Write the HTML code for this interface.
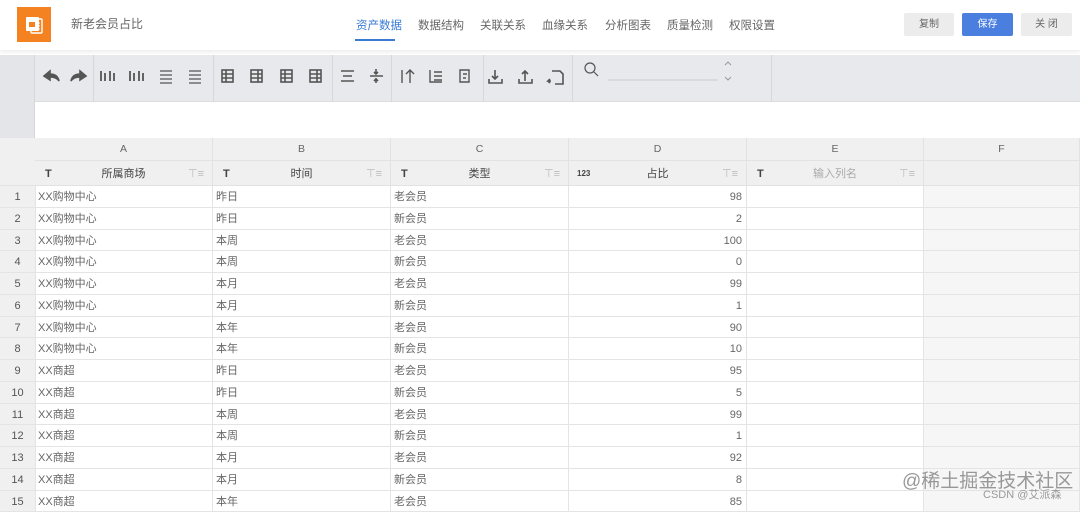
<!DOCTYPE html>
<html><head><meta charset="utf-8"><style>
*{margin:0;padding:0;box-sizing:border-box}
body{width:1080px;height:505px;overflow:hidden;background:#fff;font-family:"Liberation Sans","Noto Sans CJK SC",sans-serif;position:relative;color:#666}
.abs{position:absolute}
.hdr{left:0;top:0;width:1080px;height:50px;background:#fff;box-shadow:0 2px 4px rgba(0,0,0,.08)}
.logo{left:17px;top:7px;width:34px;height:35px;background:#f58220}
.title{left:71px;top:15px;font-size:12px;color:#666}
.nav{top:17px;font-size:11.5px;color:#666}
.btn{top:13px;height:23px;font-size:10px;text-align:center;line-height:23px;border-radius:2px}
.tb{left:0;top:55px;width:1080px;height:47px;background:#e8e9ec;border-bottom:1px solid #dcdcdc}
.sep{top:55px;width:1px;height:47px;background:#d6d7da}
.grid{left:0;top:138px}
.cell{position:absolute;border-right:1px solid #e2e2e2;border-bottom:1px solid #e2e2e2;font-size:10.5px;white-space:nowrap;overflow:hidden}
.cell b.t{font-weight:bold}
</style></head><body>
<div class="abs hdr"></div>
<div class="abs logo"><svg width="34" height="35" viewBox="0 0 34 35"><rect x="9" y="10" width="13" height="14" rx="1" fill="#fff"/><rect x="14" y="12" width="11" height="14" rx="1" fill="none" stroke="#fff" stroke-width="1.4"/><rect x="12" y="15" width="6" height="5" fill="#f58220"/><path d="M19 16h4M19 19h4M19 22h4" stroke="#fff" stroke-width="1"/></svg></div>
<div class="abs title">新老会员占比</div>
<div class="abs nav" style="left:356px;color:#3a7bd5">资产数据</div>
<div class="abs" style="left:355px;top:39px;width:40px;height:2px;background:#3a7bd5"></div>
<div class="abs nav" style="left:418px">数据结构</div>
<div class="abs nav" style="left:480px">关联关系</div>
<div class="abs nav" style="left:542px">血缘关系</div>
<div class="abs nav" style="left:605px">分析图表</div>
<div class="abs nav" style="left:667px">质量检测</div>
<div class="abs nav" style="left:729px">权限设置</div>
<div class="abs btn" style="left:904px;width:50px;background:#ececec;color:#666">复制</div>
<div class="abs btn" style="left:962px;width:51px;background:#4a7fe0;color:#fff">保存</div>
<div class="abs btn" style="left:1021px;width:51px;background:#ececec;color:#666">关 闭</div>

<div class="abs tb"></div>
<div class="abs" style="left:0;top:55px;width:35px;height:83px;background:#e4e5e8;border-right:1px solid #d6d7da"></div>
<div class="abs sep" style="left:93px"></div><div class="abs sep" style="left:213px"></div><div class="abs sep" style="left:332px"></div><div class="abs sep" style="left:391px"></div><div class="abs sep" style="left:483px"></div><div class="abs sep" style="left:572px"></div><div class="abs sep" style="left:771px"></div>
<svg class="abs" style="left:0;top:55px" width="780" height="47" fill="none" stroke="#555" stroke-width="1.6">
<path d="M44 21l6-5v3c5 0 8 2 9 7-2-3-5-4-9-4v3z" fill="#555"/>
<path d="M86 21l-6-5v3c-5 0-8 2-9 7 2-3 5-4 9-4v3z" fill="#555"/>
<path d="M101 16v10M105 18v8M110 16v10M114 18v8" stroke-width="1.8"/>
<path d="M130 16v10M134 18v8M139 16v10M143 18v8" stroke-width="1.8"/>
<path d="M160 16h12M160 20h12M160 24h12M160 28h12" stroke-width="1.3"/>
<path d="M189 16h12M189 20h12M189 24h12M189 28h12" stroke-width="1.3"/>
<rect x="222" y="15" width="11" height="12"/><path d="M222 19h11M222 23h11M226 15v12"/>
<rect x="251" y="15" width="11" height="12"/><path d="M251 19h11M251 23h11M258 15v12"/>
<rect x="281" y="15" width="11" height="12"/><path d="M281 19h11M281 23h11M285 15v12"/>
<rect x="310" y="15" width="11" height="12"/><path d="M310 19h11M310 23h11M317 15v12"/>
<path d="M341 16h13M343 21h9M341 26h13"/>
<path d="M370 21h13M376 14v5M376 23v5M374 17l2 2 2-2M374 26l2-2 2 2"/>
<path d="M402 15v13M410 15v13M406 19l4-4 4 4" stroke-width="1.4"/>
<path d="M430 15v12h12M434 17h8M434 21h8M434 25h8" stroke-width="1.4"/>
<path d="M460 15h9v12h-9zM463 19h4M463 23h3" stroke-width="1.4"/>
<path d="M489 24v4h13v-4M495 15v9M492 21l3 3 3-3"/>
<path d="M519 24v4h13v-4M525 26v-10M522 19l3-3 3 3"/>
<path d="M552 16h8l3 3v10h-8M551 26h-3l2-2M548 26l2 2"/>
<circle cx="590" cy="13" r="5" stroke-width="1.2"/><path d="M594 17l4 4" stroke-width="1.2"/>
<path d="M608 25h110" stroke="#ccc" stroke-width="1"/>
<path d="M725 10l3-3 3 3M725 22l3 3 3-3" stroke="#999" stroke-width="1"/>
</svg>

<div class="abs grid">
<div class="cell" style="left:0;top:0;width:36px;height:48px;background:#f0f0f0"></div>
<div class="cell" style="left:35px;top:0;width:178px;height:23px;background:#f0f0f0;text-align:center;line-height:23px">A</div>
<div class="cell" style="left:213px;top:0;width:178px;height:23px;background:#f0f0f0;text-align:center;line-height:23px">B</div>
<div class="cell" style="left:391px;top:0;width:178px;height:23px;background:#f0f0f0;text-align:center;line-height:23px">C</div>
<div class="cell" style="left:569px;top:0;width:178px;height:23px;background:#f0f0f0;text-align:center;line-height:23px">D</div>
<div class="cell" style="left:747px;top:0;width:177px;height:23px;background:#f0f0f0;text-align:center;line-height:23px">E</div>
<div class="cell" style="left:924px;top:0;width:156px;height:23px;background:#f0f0f0;text-align:center;line-height:23px">F</div>
<div class="cell" style="left:35px;top:23px;width:178px;height:25px;background:#f0f0f0;line-height:26px;color:#444;text-align:center;font-size:11px"><b style="position:absolute;left:10px">T</b>所属商场<span style="position:absolute;right:8px;color:#bbb">⊤≡</span></div>
<div class="cell" style="left:213px;top:23px;width:178px;height:25px;background:#f0f0f0;line-height:26px;color:#444;text-align:center;font-size:11px"><b style="position:absolute;left:10px">T</b>时间<span style="position:absolute;right:8px;color:#bbb">⊤≡</span></div>
<div class="cell" style="left:391px;top:23px;width:178px;height:25px;background:#f0f0f0;line-height:26px;color:#444;text-align:center;font-size:11px"><b style="position:absolute;left:10px">T</b>类型<span style="position:absolute;right:8px;color:#bbb">⊤≡</span></div>
<div class="cell" style="left:569px;top:23px;width:178px;height:25px;background:#f0f0f0;line-height:26px;color:#444;text-align:center;font-size:11px"><b style="position:absolute;left:8px;font-size:8px">123</b>占比<span style="position:absolute;right:8px;color:#bbb">⊤≡</span></div>
<div class="cell" style="left:747px;top:23px;width:177px;height:25px;background:#f0f0f0;line-height:26px;color:#aaa;text-align:center;font-size:11px"><b style="position:absolute;left:10px;color:#444">T</b>输入列名<span style="position:absolute;right:8px;color:#bbb">⊤≡</span></div>
<div class="cell" style="left:924px;top:23px;width:156px;height:25px;background:#f0f0f0"></div>
</div>

<div class="abs" style="left:0;top:186px;width:1080px">
<style>.r{position:relative;height:21.75px;font-size:11px;line-height:23px}.r div{position:absolute;top:0;height:21.75px;border-right:1px solid #e4e4e4;border-bottom:1px solid #e4e4e4;padding-left:3px;overflow:hidden}
.r .n{left:0;width:36px;background:#f0f0f0;text-align:center;padding:0;color:#555}.r .a{left:35px;width:178px}.r .b{left:213px;width:178px}.r .c{left:391px;width:178px}.r .d{left:569px;width:178px;text-align:right;padding-right:4px}.r .e{left:747px;width:177px}.r .f{left:924px;width:156px;background:#f6f6f6}</style>
<div class="r"><div class="n">1</div><div class="a">XX购物中心</div><div class="b">昨日</div><div class="c">老会员</div><div class="d">98</div><div class="e"></div><div class="f"></div></div>
<div class="r"><div class="n">2</div><div class="a">XX购物中心</div><div class="b">昨日</div><div class="c">新会员</div><div class="d">2</div><div class="e"></div><div class="f"></div></div>
<div class="r"><div class="n">3</div><div class="a">XX购物中心</div><div class="b">本周</div><div class="c">老会员</div><div class="d">100</div><div class="e"></div><div class="f"></div></div>
<div class="r"><div class="n">4</div><div class="a">XX购物中心</div><div class="b">本周</div><div class="c">新会员</div><div class="d">0</div><div class="e"></div><div class="f"></div></div>
<div class="r"><div class="n">5</div><div class="a">XX购物中心</div><div class="b">本月</div><div class="c">老会员</div><div class="d">99</div><div class="e"></div><div class="f"></div></div>
<div class="r"><div class="n">6</div><div class="a">XX购物中心</div><div class="b">本月</div><div class="c">新会员</div><div class="d">1</div><div class="e"></div><div class="f"></div></div>
<div class="r"><div class="n">7</div><div class="a">XX购物中心</div><div class="b">本年</div><div class="c">老会员</div><div class="d">90</div><div class="e"></div><div class="f"></div></div>
<div class="r"><div class="n">8</div><div class="a">XX购物中心</div><div class="b">本年</div><div class="c">新会员</div><div class="d">10</div><div class="e"></div><div class="f"></div></div>
<div class="r"><div class="n">9</div><div class="a">XX商超</div><div class="b">昨日</div><div class="c">老会员</div><div class="d">95</div><div class="e"></div><div class="f"></div></div>
<div class="r"><div class="n">10</div><div class="a">XX商超</div><div class="b">昨日</div><div class="c">新会员</div><div class="d">5</div><div class="e"></div><div class="f"></div></div>
<div class="r"><div class="n">11</div><div class="a">XX商超</div><div class="b">本周</div><div class="c">老会员</div><div class="d">99</div><div class="e"></div><div class="f"></div></div>
<div class="r"><div class="n">12</div><div class="a">XX商超</div><div class="b">本周</div><div class="c">新会员</div><div class="d">1</div><div class="e"></div><div class="f"></div></div>
<div class="r"><div class="n">13</div><div class="a">XX商超</div><div class="b">本月</div><div class="c">老会员</div><div class="d">92</div><div class="e"></div><div class="f"></div></div>
<div class="r"><div class="n">14</div><div class="a">XX商超</div><div class="b">本月</div><div class="c">新会员</div><div class="d">8</div><div class="e"></div><div class="f"></div></div>
<div class="r"><div class="n">15</div><div class="a">XX商超</div><div class="b">本年</div><div class="c">老会员</div><div class="d">85</div><div class="e"></div><div class="f"></div></div>
</div>
<div class="abs" style="left:902px;top:466px;font-size:19px;color:#888;opacity:.85">@稀土掘金技术社区</div>
<div class="abs" style="left:983px;top:486px;font-size:11px;color:#999">CSDN @艾派森</div>
</body></html>
